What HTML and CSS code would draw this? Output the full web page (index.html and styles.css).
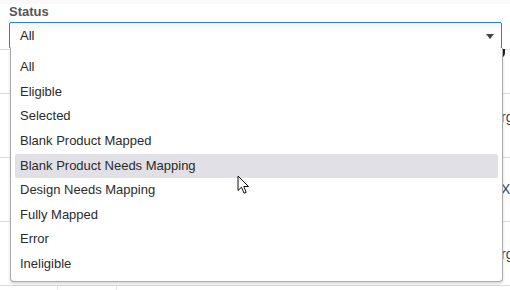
FILE: index.html
```html
<!DOCTYPE html>
<html>
<head>
<meta charset="utf-8">
<link rel="stylesheet" href="styles.css">
</head>
<body>
<div class="page">
  <div class="topbar"></div>
  <div class="field">
    <label class="label">Status</label>
    <div class="select-wrap">
      <div class="select">
        <span>All</span>
        <span class="caret"></span>
      </div>
      <ul class="menu">
        <li>All</li>
        <li>Eligible</li>
        <li>Selected</li>
        <li>Blank Product Mapped</li>
        <li class="hover">Blank Product Needs Mapping</li>
        <li>Design Needs Mapping</li>
        <li>Fully Mapped</li>
        <li>Error</li>
        <li>Ineligible</li>
      </ul>
    </div>
  </div>
  <div class="table">
    <div class="row head"><span class="bracket"></span></div>
    <div class="row"><span class="cell dark r1">rg</span></div>
    <div class="row"><span class="cell blue r2">XL</span></div>
    <div class="row"><span class="cell dark r3">rg</span></div>
    <div class="row last"><span class="c1"></span><span class="c2"></span><span class="c3"></span></div>
  </div>
  <svg class="cursor" width="13" height="20" viewBox="0 0 13 20">
    <path d="M1 1 L1 15.5 L4.5 12.2 L7 18.2 L9.2 17.3 L6.8 11.5 L11.5 11.5 Z" fill="#fff" stroke="#111" stroke-width="1" stroke-linejoin="round"/>
  </svg>
</div>
</body>
</html>
```

FILE: styles.css
```css
html, body {
  margin: 0;
  padding: 0;
  background: #fff;
  overflow: hidden;
}
body {
  width: 510px;
  height: 290px;
  font-family: "Liberation Sans", Arial, sans-serif;
  font-size: 13px;
  color: #333;
}
.page {
  position: relative;
  width: 510px;
  height: 290px;
  overflow: hidden;
}
.topbar {
  height: 4px;
  background: #f9f9f9;
}
.field {
  padding: 0 8px 0 9px;
  position: relative;
  z-index: 2;
}
.label {
  display: block;
  font-weight: bold;
  font-size: 13px;
  color: #555;
  line-height: 16px;
  height: 18px;
}
.select-wrap {
  position: relative;
}
.select {
  box-sizing: border-box;
  height: 27px;
  border: 1px solid #2a80d6;
  border-radius: 2px;
  background: linear-gradient(#f6f6f6, #fff 40%);
  display: flex;
  align-items: center;
  justify-content: space-between;
  padding: 0 7px 0 10px;
  color: #222;
}
.caret {
  width: 0;
  height: 0;
  border-left: 4px solid transparent;
  border-right: 4px solid transparent;
  border-top: 5px solid #444;
  margin-top: 1px;
}
.menu {
  position: absolute;
  left: 1px;
  right: -1px;
  top: 26px;
  margin: 0;
  list-style: none;
  padding: 7px 4px 4px;
  background: #fff;
  border: 1px solid #aaa;
  border-top: none;
  border-radius: 0 0 4px 4px;
  box-shadow: 0 2px 3px rgba(0,0,0,0.15);
}
.menu li {
  height: 24.65px;
  line-height: 24.65px;
  padding-left: 5px;
  color: #2b2b2b;
  border-radius: 2px;
  white-space: nowrap;
}
.menu li.hover {
  background: #e0e0e6;
}
.table {
  position: absolute;
  left: 0;
  top: 49px;
  width: 510px;
  height: 241px;
  overflow: hidden;
  z-index: 1;
}
.row {
  box-sizing: border-box;
  height: 64px;
  border-top: 1px solid #ddd;
  position: relative;
}
.row.head {
  height: 44px;
}
.cell {
  position: absolute;
  left: 501px;
  font-size: 14px;
}
.r1 { top: 15px; }
.r2 { top: 23px; }
.r3 { top: 24px; }
.dark { color: #444; }
.blue { color: #2b4a78; }
.bracket {
  position: absolute;
  left: 498px;
  top: -5px;
  width: 5px;
  height: 13px;
  border-right: 2px solid #222;
  border-radius: 0 5px 5px 0;
}
.row.last {
  display: flex;
  height: 10px;
  border-top: 1px solid #ddd;
}
.c1 { width: 57px; border-right: 1px solid #e6e6e6; height: 10px; }
.c2 { width: 58px; border-right: 1px solid #e6e6e6; height: 10px; }
.cursor {
  position: absolute;
  left: 237px;
  top: 175px;
  z-index: 5;
}
```
